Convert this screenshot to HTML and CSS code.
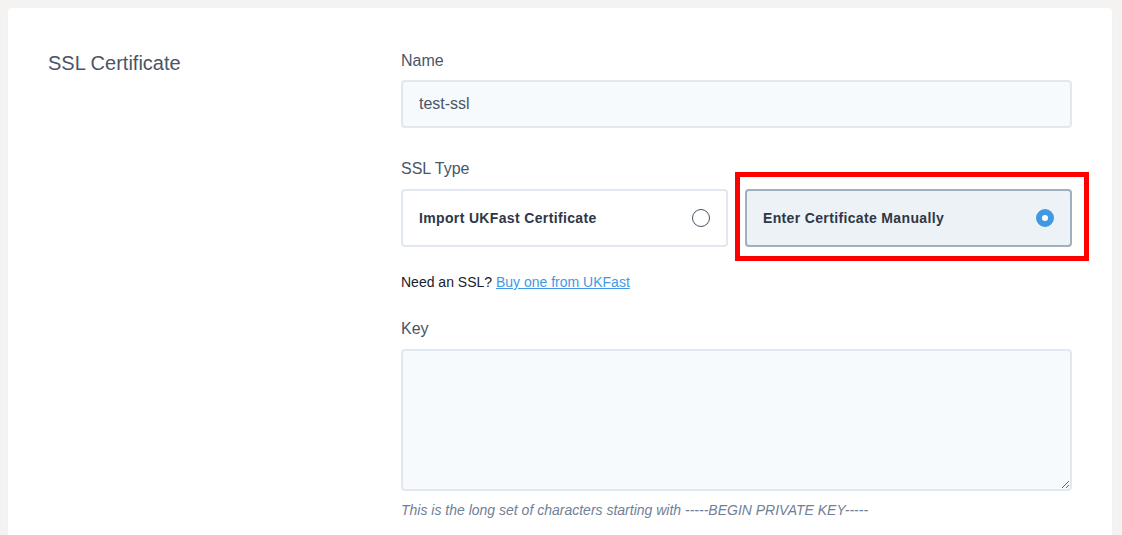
FILE: index.html
```html
<!DOCTYPE html>
<html lang="en">
<head>
<meta charset="utf-8">
<title>SSL Certificate</title>
<link rel="stylesheet" href="styles.css">
</head>
<body>
<div class="card">
  <h2 class="section-title">SSL Certificate</h2>
  <div class="fields">
    <label class="label" for="name">Name</label>
    <input class="input" id="name" type="text" value="test-ssl">

    <div class="label label-type">SSL Type</div>
    <div class="options">
      <div class="option">
        <span class="option-text">Import UKFast Certificate</span>
        <span class="radio"></span>
      </div>
      <div class="option option-selected">
        <span class="option-text">Enter Certificate Manually</span>
        <span class="radio radio-on"></span>
        <span class="highlight"></span>
      </div>
    </div>
    <p class="note">Need an SSL? <a href="#" class="link">Buy one from UKFast</a></p>

    <label class="label label-key" for="key">Key</label>
    <textarea class="textarea" id="key"></textarea>
    <p class="help">This is the long set of characters starting with -----BEGIN PRIVATE KEY-----</p>
  </div>
</div>
</body>
</html>
```

FILE: styles.css
```css
html, body {
  margin: 0;
  padding: 0;
}
body {
  background: #f4f3f1;
  font-family: "Liberation Sans", Arial, sans-serif;
  padding: 8px 10px 0 8px;
  color: #4a5568;
}
.card {
  background: #ffffff;
  border-radius: 4px;
  padding: 41px 40px 60px 40px;
  display: grid;
  grid-template-columns: 353px 1fr;
  box-shadow: 0 1px 2px rgba(0,0,0,0.04);
}
.section-title {
  margin: 0;
  font-size: 20px;
  font-weight: normal;
  line-height: 28px;
  color: #4a5568;
}
.fields {
  display: flex;
  flex-direction: column;
}
.label {
  display: block;
  font-size: 16px;
  line-height: 24px;
  color: #4a5568;
  margin-bottom: 7px;
}
.input {
  box-sizing: border-box;
  height: 48px;
  width: 100%;
  border: 2px solid #e2e8f0;
  border-radius: 4px;
  background: #f7fafc;
  padding: 0 16px;
  font-family: inherit;
  font-size: 16px;
  color: #4a5568;
  outline: none;
}
.label-type {
  margin-top: 29px;
  margin-bottom: 8px;
}
.options {
  display: flex;
  gap: 17px;
}
.option {
  position: relative;
  flex: 1;
  box-sizing: border-box;
  height: 58px;
  border: 2px solid #e2e8f0;
  border-radius: 4px;
  background: #ffffff;
  display: flex;
  align-items: center;
  justify-content: space-between;
  padding: 0 16px;
}
.option-selected {
  background: #edf2f7;
  border-color: #a0aec0;
}
.option-text {
  font-size: 14px;
  font-weight: bold;
  letter-spacing: 0.025em;
  color: #2d3748;
}
.radio {
  box-sizing: border-box;
  width: 18px;
  height: 18px;
  border-radius: 50%;
  border: 1px solid #4a5568;
  background: #ffffff;
}
.radio-on {
  border: 6px solid #4299e1;
}
.highlight {
  position: absolute;
  left: -12px;
  top: -19px;
  right: -19px;
  bottom: -16px;
  border: 5px solid #ff0000;
  pointer-events: none;
}
.note {
  margin: 25px 0 0 0;
  font-size: 14px;
  line-height: 20px;
  color: #1a202c;
}
.link {
  color: #4299e1;
  text-decoration: underline;
}
.label-key {
  margin-top: 25px;
  margin-bottom: 8px;
}
.textarea {
  box-sizing: border-box;
  width: 100%;
  height: 142px;
  border: 2px solid #e2e8f0;
  border-radius: 4px;
  background: #f7fafc;
  font-family: inherit;
  font-size: 16px;
  outline: none;
  display: block;
}
.help {
  margin: 9px 0 0 0;
  font-size: 14px;
  line-height: 20px;
  font-style: italic;
  color: #718096;
}
```
